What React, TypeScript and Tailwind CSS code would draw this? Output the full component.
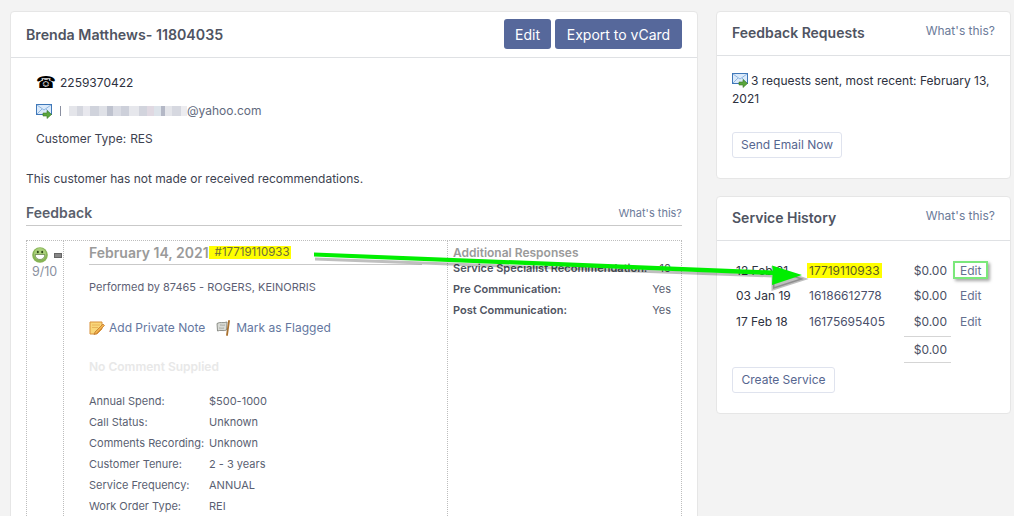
import React from 'react';

const blurBlocks = [
  'bg-[#8a8fa0] w-[1px]', 'bg-white w-[8px]', 'bg-[#e4e5ea] w-[8px]', 'bg-[#d5d7df] w-[6px]', 'bg-[#e8e8ee] w-[7px]',
  'bg-[#d0d3dc] w-[9px]', 'bg-[#dfe1e7] w-[8px]', 'bg-[#bfc3cf] w-[6px]', 'bg-[#dadce4] w-[8px]', 'bg-[#cdd0da] w-[8px]',
  'bg-[#e6e7ec] w-[10px]', 'bg-[#d2d4dd] w-[8px]', 'bg-[#e0d9e2] w-[7px]', 'bg-[#dde3ea] w-[7px]', 'bg-[#b4b8c6] w-[4px]',
  'bg-[#e4e5ea] w-[7px]', 'bg-[#d6d8e0] w-[9px]', 'bg-[#ececf0] w-[6px]',
];

const MailIcon = () => (
  <svg width="16" height="16" viewBox="0 0 16 16" className="shrink-0">
    <rect x="0.5" y="1.500" width="15" height="10" fill="#dbeafa" stroke="#3f77b8" />
    <path d="M1 2l7 5 7-5M1 11l5-5M15 11l-5-5" fill="none" stroke="#8fb6e0" />
    <path d="M7 10h4V7.500l4.500 4-4.500 4V13H7z" fill="#5aa63c" stroke="#3c7a25" strokeWidth="0.6" />
  </svg>
);

const SmileIcon = () => (
  <svg width="16" height="16" viewBox="0 0 16 16">
    <circle cx="8" cy="8" r="7.800" fill="#86b455" />
    <circle cx="8" cy="7" r="6" fill="#a9cf7a" />
    <ellipse cx="5.800" cy="5" rx="1" ry="1.300" fill="#2f4a1a" />
    <ellipse cx="10.200" cy="5" rx="1" ry="1.300" fill="#2f4a1a" />
    <path d="M3.200 7.500h9.600c0 3.200-2.200 5-4.800 5s-4.800-1.800-4.800-5z" fill="#fff" stroke="#46662a" strokeWidth="0.6" />
  </svg>
);

const NoteIcon = () => (
  <svg width="16" height="16" viewBox="0 0 16 16" className="shrink-0">
    <path d="M1 2h12v7l-5 5H1z" fill="#f9d77a" stroke="#d8913a" />
    <path d="M3 5h8M3 7.500h6" stroke="#e8b45a" />
    <path d="M6 12l8-8 1.500 1.500-8 8-2.500 1z" fill="#f3b04a" stroke="#b9742a" strokeWidth="0.7" />
  </svg>
);

const FlagIcon = () => (
  <svg width="16" height="16" viewBox="0 0 16 16" className="shrink-0">
    <path d="M1 3.500c3-2 6 0 10-1.500l-.5 8c-3 1.500-6-.5-9 1z" fill="#d9dbd6" stroke="#777a72" strokeWidth="0.8" />
    <path d="M4 5c2 0 3 .5 5 0M3 8c2 0 3 .5 5 0" stroke="#9a9c95" strokeWidth="0.8" fill="none" />
    <path d="M13 1l-2 14" stroke="#a9712f" strokeWidth="1.800" strokeLinecap="round" />
  </svg>
);

const details = [
  ['Annual Spend:', '$500-1000'],
  ['Call Status:', 'Unknown'],
  ['Comments Recording:', 'Unknown'],
  ['Customer Tenure:', '2 - 3 years'],
  ['Service Frequency:', 'ANNUAL'],
  ['Work Order Type:', 'REI'],
];

const services = [
  { date: '12 Feb 21', id: '17719110933', amount: '$0.00', marked: true },
  { date: '03 Jan 19', id: '16186612778', amount: '$0.00', marked: false },
  { date: '17 Feb 18', id: '16175695405', amount: '$0.00', marked: false },
];

const Card = ({ title, children }: { title: string; children: React.ReactNode }) => (
  <div className="bg-white border border-[#e6e6e6] rounded-[4px]">
    <div className="h-[44px] px-[15px] border-b border-[#dfe1e4] flex justify-between">
      <h3 className="text-[14px] font-semibold text-[#4f5462] mt-[11px] leading-[20px]">{title}</h3>
      <div className="mt-[10px] leading-[18px] text-[12px] text-[#6b7a99]">What's this?</div>
    </div>
    {children}
  </div>
);

export default function App() {
  return (
    <div className="relative h-[516px] w-[1014px] overflow-hidden bg-[#f3f3f3] font-['Inter',sans-serif] text-[12px] text-[#3d4250]">
      <div className="flex items-start gap-[18px] pl-[10px] pt-[11px]">
        {/* main column */}
        <div className="w-[688px] h-[520px] shrink-0 bg-white border border-[#e6e6e6] rounded-[4px]">
          <div className="h-[46px] px-[15px] border-b border-[#dfe1e4] flex items-center justify-between">
            <h2 className="text-[14.2px] font-semibold text-[#4f5462]">Brenda Matthews- 11804035</h2>
            <div className="flex gap-[4px] -mt-[1px]">
              <button className="h-[30px] w-[47px] rounded-[3px] bg-[#56689b] text-white text-[14px]">Edit</button>
              <button className="h-[30px] w-[127px] rounded-[3px] bg-[#56689b] text-white text-[14px]">Export to vCard</button>
            </div>
          </div>

          <div className="px-[15px]">
            <div className="pl-[10px] pt-[15px]">
              <div className="flex items-center h-[20px] gap-[8px] text-[#2d3140]">
                <span className="w-[16px] text-[16px] leading-none text-black font-['DejaVu_Sans',sans-serif]">☎</span>
                <span>2259370422</span>
              </div>
              <div className="flex items-center h-[20px] gap-[8px] mt-[8px]">
                <MailIcon />
                <span className="flex items-center text-[#626a7e]">
                  <span className="flex h-[10px] w-[127px]">
                    {blurBlocks.map((c, i) => <span key={i} className={c} />)}
                  </span>
                  @yahoo.com
                </span>
              </div>
              <div className="h-[20px] flex items-center mt-[8px] gap-[4px]">
                <span>Customer Type:</span><span>RES</span>
              </div>
            </div>

            <p className="mt-[20px] leading-[20px]">This customer has not made or received recommendations.</p>

            <div className="mt-[15px] h-[22px] flex items-start justify-between border-b border-[#c9c9c9]">
              <h3 className="text-[14px] font-semibold text-[#5a5f6c] leading-[18px]">Feedback</h3>
              <span className="text-[11px] text-[#6b7a99] leading-[18px]">What's this?</span>
            </div>

            <div className="mt-[14px] flex h-[300px] border-t border-l border-r border-dotted border-[#bdbdbd]">
              <div className="w-[37px] shrink-0 border-r border-dotted border-[#bdbdbd] pl-[5px] pt-[6px]">
                <div className="flex items-center gap-[6px]">
                  <SmileIcon />
                  <span className="w-[8px] h-[5px] bg-[#888] border border-[#666]" />
                </div>
                <div className="text-[#8a90a0] text-[12.5px] leading-[16px] mt-[1px]">9/10</div>
              </div>

              <div className="w-[384px] shrink-0 border-r border-dotted border-[#bdbdbd] px-[25px]">
                <div className="h-[24px] flex items-center border-b border-[#c9c9c9]">
                  <span className="text-[14px] font-semibold text-[#9a9a9a]">February 14, 2021</span>
                  <span className="bg-[#ffff00] pl-[6px] pr-[1px] text-[11.500px] leading-[13px] text-[#6c6c3c]">#17719110933</span>
                </div>
                <p className="text-[11px] text-[#5d6175] mt-[14px] leading-[16px]">Performed by 87465 - ROGERS, KEINORRIS</p>
                <div className="flex items-center gap-[11px] mt-[24px] text-[12px] text-[#64779f]">
                  <span className="flex items-center gap-[4px]"><NoteIcon />Add Private Note</span>
                  <span className="flex items-center gap-[4px]"><FlagIcon />Mark as Flagged</span>
                </div>
                <p className="mt-[22px] text-[12px] font-semibold text-[#e8e8e8] leading-[16px]">No Comment Supplied</p>
                <div className="mt-[16px] text-[11px] text-[#5a5f72]">
                  {details.map(([k, v]) => (
                    <div key={k} className="flex h-[21px] items-center">
                      <span className="w-[120px] shrink-0">{k}</span>
                      <span>{v}</span>
                    </div>
                  ))}
                </div>
              </div>

              <div className="flex-1 px-[5px] pr-[10px]">
                <div className="text-[12px] font-semibold text-[#9a9a9a] mt-[4px] leading-[16px]">Additional Responses</div>
                <div className="text-[11px] font-semibold text-[#4f5462]">
                  <div className="flex justify-between h-[16px] items-center -mt-[1px]">
                    <span>Service Specialist Recommendation:</span><span className="font-normal">10</span>
                  </div>
                  <div className="flex justify-between h-[21px] items-center mt-[3px]">
                    <span>Pre Communication:</span><span className="font-normal text-[#5a5f72]">Yes</span>
                  </div>
                  <div className="flex justify-between h-[21px] items-center">
                    <span>Post Communication:</span><span className="font-normal text-[#5a5f72]">Yes</span>
                  </div>
                </div>
              </div>
            </div>
          </div>
        </div>

        {/* side column */}
        <div className="w-[295px] shrink-0 flex flex-col gap-[17px]">
          <div className="h-[168px]">
            <Card title="Feedback Requests">
              <div className="px-[15px] pt-[16px] h-[122px]">
                <p className="leading-[18px] text-[#2d3140]">
                  <span className="inline-block align-[-3px] mr-[3px]"><MailIcon /></span>
                  3 requests sent, most recent: February 13, 2021
                </p>
                <button className="mt-[24px] h-[26px] w-[110px] rounded-[3px] border border-[#dfe3ee] text-[12px] text-[#56668f]">Send Email Now</button>
              </div>
            </Card>
          </div>

          <Card title="Service History">
            <div className="px-[15px] pt-[17px] h-[172px]">
              {services.map((s, i) => (
                <div key={s.id} className={`flex items-start leading-[26px] pl-[4px] ${i === 0 ? 'h-[25px]' : 'h-[26px]'}`}>
                  <span className="w-[73px] shrink-0 text-[#2d3140]">{s.date}</span>
                  <span className="w-[95px] shrink-0 text-[#4a4f6a]">
                    <span className={s.marked ? 'bg-[#ffff00] -ml-[2px] px-[2px] text-[#5c5c20]' : ''}>{s.id}</span>
                  </span>
                  <span className="w-[47px] shrink-0 text-right pr-[4px] text-[#4a5063]">{s.amount}</span>
                  <span className="pl-[9px] text-[#64708f]">Edit</span>
                </div>
              ))}
              <div className="flex mt-[1px]">
                <div className="ml-[172px] w-[47px] h-[27px] border-y border-[#d5d5d5] flex items-center justify-end pr-[4px] text-[#4a5063]">$0.00</div>
              </div>
              <button className="mt-[4px] h-[26px] w-[103px] rounded-[3px] border border-[#dfe3ee] text-[12px] text-[#56668f]">Create Service</button>
            </div>
          </Card>
        </div>
      </div>

      {/* annotations drawn over the screenshot */}
      <div className="absolute left-[953px] top-[261px] w-[35px] h-[18px] border-2 border-[#7be87b] shadow-[2px_2px_3px_rgba(0,0,0,0.35)]" />
      <svg className="absolute left-0 top-0 pointer-events-none" width="1014" height="516">
        <path d="M314 256L772 273M772 265L803 276L772 286Z" transform="translate(1 3)" stroke="#000" strokeOpacity="0.25" strokeWidth="3" fill="#000" fillOpacity="0.25" />
        <path d="M314 252.500L773 270.500L772 265.500L802 275L772 285L772.500 275L314 256.500Z" fill="#00ee00" />
      </svg>
    </div>
  );
}
